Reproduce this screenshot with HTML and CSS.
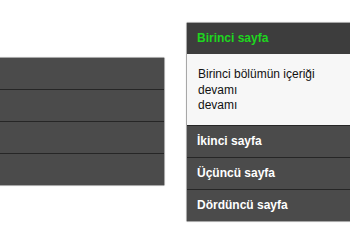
FILE: index.html
```html
<!DOCTYPE html>
<html lang="tr">
<head>
<meta charset="utf-8">
<link rel="stylesheet" href="styles.css">
</head>
<body>
<div class="stage">
  <div class="accordion accordion--left">
    <div class="acc-head"></div>
    <div class="acc-head"></div>
    <div class="acc-head"></div>
    <div class="acc-head"></div>
  </div>
  <div class="accordion accordion--right">
    <div class="acc-head acc-head--active">Birinci sayfa</div>
    <div class="acc-body">Birinci bölümün içeriği<br>devamı<br>devamı</div>
    <div class="acc-head">İkinci sayfa</div>
    <div class="acc-head">Üçüncü sayfa</div>
    <div class="acc-head">Dördüncü sayfa</div>
  </div>
</div>
</body>
</html>
```
FILE: styles.css
```css
html, body {
  margin: 0;
  padding: 0;
  background: #ffffff;
  overflow: hidden;
}
.stage {
  display: flex;
  align-items: flex-start;
  gap: 21px;
  width: 350px;
  height: 244px;
  overflow: hidden;
  font-family: "Liberation Sans", Arial, sans-serif;
}
.accordion {
  flex: none;
  width: 200px;
  border: 1px solid #a8a8a8;
  border-radius: 2px;
  box-shadow: 0 0 1px rgba(0,0,0,0.25);
  background: #4b4b4b;
}
.accordion--left {
  margin-left: -37px;
  margin-top: 57px;
}
.accordion--right {
  margin-top: 22px;
}
.acc-head {
  height: 31px;
  line-height: 31px;
  padding-left: 10px;
  font-size: 12px;
  font-weight: bold;
  color: #ffffff;
  background: #4b4b4b;
  border-top: 1px solid #262626;
  white-space: nowrap;
}
.acc-head:first-child {
  border-top: none;
}
.acc-head--active {
  background: #3d3d3d;
  color: #1ed61e;
}
.acc-body {
  background: #f7f7f7;
  color: #111111;
  font-size: 12px;
  line-height: 15.5px;
  padding: 13px 10px 11px 11px;
}
```
